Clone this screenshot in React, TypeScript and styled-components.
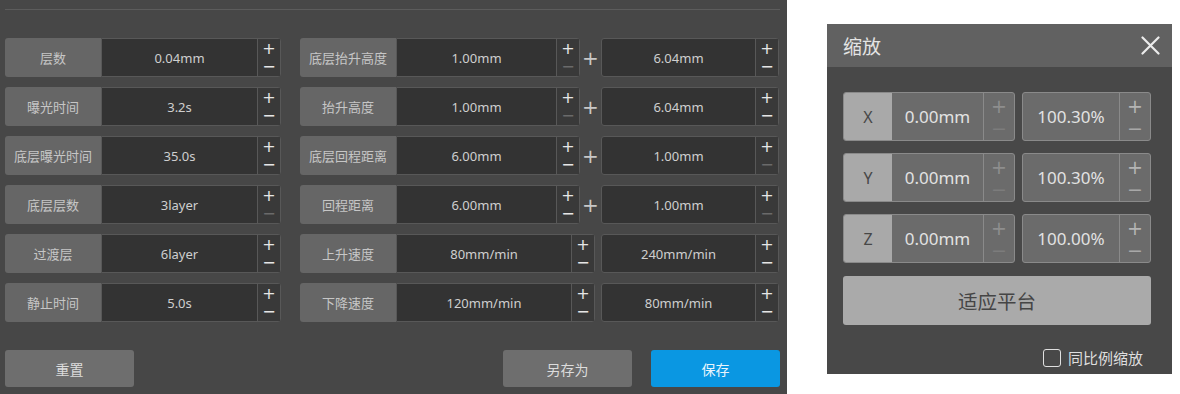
import React from "react";
import styled, { createGlobalStyle } from "styled-components";

const GlobalStyle = createGlobalStyle`
  body {
    margin: 0;
    background: #ffffff;
    font-family: "Noto Sans", "Noto Sans CJK SC", sans-serif;
  }
`;

const Page = styled.div`
  display: flex;
  align-items: flex-start;
  width: 1180px;
  height: 394px;
`;

const Panel = styled.div`
  width: 787px;
  height: 394px;
  box-sizing: border-box;
  background: #474747;
  padding: 9px 7px 0 5px;
  display: flex;
  flex-direction: column;
`;

const TopLine = styled.div`
  height: 1px;
  width: 775px;
  background: #5c5c5c;
`;

const Rows = styled.div`
  margin-top: 28px;
  display: flex;
  flex-direction: column;
  gap: 10px;
`;

const Row = styled.div`
  display: flex;
  height: 39px;
`;

const Field = styled.div<{ $w: number }>`
  display: flex;
  width: ${(p) => p.$w}px;
  height: 100%;
  flex-shrink: 0;
`;

const Label = styled.div`
  width: 96px;
  flex-shrink: 0;
  background: #666666;
  color: #c6c6c6;
  font-size: 13px;
  font-family: "Noto Sans CJK SC", sans-serif;
  border-radius: 3px 0 0 3px;
  display: flex;
  align-items: center;
  justify-content: center;
`;

const ValueBox = styled.div`
  flex: 1;
  display: flex;
  box-sizing: border-box;
  border: 1px solid #585858;
  border-radius: 0 3px 3px 0;
  background: #333333;
  &.full {
    border-radius: 3px;
  }
`;

const Value = styled.div`
  flex: 1;
  display: flex;
  align-items: center;
  justify-content: center;
  color: #cfcfcf;
  font-size: 13px;
`;

const Stepper = styled.div`
  width: 22px;
  flex-shrink: 0;
  border-left: 1px solid #585858;
  background: #393939;
  display: flex;
  flex-direction: column;
  align-items: center;
  justify-content: center;
  font-size: 16px;
  line-height: 18px;
  font-family: "DejaVu Sans", sans-serif;
`;

const Sign = styled.span<{ $dim?: boolean }>`
  color: ${(p) => (p.$dim ? "#6a6a6a" : "#e6e6e6")};
`;

const Joiner = styled.div<{ $w: number }>`
  width: ${(p) => p.$w}px;
  flex-shrink: 0;
  display: flex;
  align-items: center;
  justify-content: center;
  color: #c8c8c8;
  font-size: 20px;
  font-family: "DejaVu Sans", sans-serif;
`;

const Gap = styled.div<{ $w: number }>`
  width: ${(p) => p.$w}px;
  flex-shrink: 0;
`;

const Footer = styled.div`
  margin-top: 28px;
  display: flex;
  height: 37px;
`;

const Button = styled.button<{ $primary?: boolean }>`
  width: 129px;
  height: 37px;
  border: none;
  border-radius: 3px;
  background: ${(p) => (p.$primary ? "#0a97e2" : "#6e6e6e")};
  color: ${(p) => (p.$primary ? "#e8f4fc" : "#dcdcdc")};
  font-family: "Noto Sans CJK SC", sans-serif;
  font-size: 14px;
  padding: 0;
`;

/* right dialog */
const Dialog = styled.div`
  margin: 24px 0 0 40px;
  width: 345px;
  height: 350px;
  background: #484848;
  display: flex;
  flex-direction: column;
`;

const Header = styled.div`
  height: 43px;
  background: #616161;
  display: flex;
  align-items: center;
  justify-content: space-between;
  padding: 0 12px 0 16px;
  color: #e4e4e4;
  font-size: 19px;
  font-family: "Noto Sans CJK SC", sans-serif;
`;

const CloseIcon = styled.svg`
  width: 19px;
  height: 19px;
`;

const DialogBody = styled.div`
  padding: 25px 21px 0 16px;
  display: flex;
  flex-direction: column;
  gap: 12px;
`;

const AxisRow = styled.div`
  display: flex;
  gap: 7px;
  height: 49px;
`;

const AxisBox = styled.div<{ $w: number }>`
  width: ${(p) => p.$w}px;
  display: flex;
  box-sizing: border-box;
  border: 1px solid #8a8a8a;
  border-radius: 3px;
  background: #6b6b6b;
  overflow: hidden;
`;

const AxisLabel = styled.div`
  width: 48px;
  background: #a9a9a9;
  color: #474747;
  font-size: 16px;
  display: flex;
  align-items: center;
  justify-content: center;
`;

const AxisValue = styled.div`
  flex: 1;
  display: flex;
  align-items: center;
  justify-content: center;
  color: #e2e2e2;
  font-size: 17px;
`;

const AxisStepper = styled.div<{ $dim?: boolean }>`
  width: 30px;
  border-left: 1px solid #8a8a8a;
  display: flex;
  flex-direction: column;
  align-items: center;
  justify-content: center;
  font-family: "DejaVu Sans", sans-serif;
  font-size: 19px;
  line-height: 22px;
  color: ${(p) => (p.$dim ? "#8e8e8e" : "#b4b4b4")};
  span:last-child {
    color: ${(p) => (p.$dim ? "#7c7c7c" : "#a8a8a8")};
  }
`;

const FitButton = styled.button`
  margin-top: 1px;
  height: 49px;
  width: 308px;
  border: none;
  border-radius: 3px;
  background: #aaaaaa;
  color: #454545;
  font-family: "Noto Sans CJK SC", sans-serif;
  font-size: 19.5px;
  padding: 0;
`;

const CheckRow = styled.label`
  margin-top: 10px;
  align-self: flex-end;
  margin-right: 8px;
  display: flex;
  align-items: center;
  gap: 7px;
  color: #dedede;
  font-size: 15px;
  font-family: "Noto Sans CJK SC", sans-serif;
`;

const Box = styled.span`
  width: 18px;
  height: 18px;
  box-sizing: border-box;
  border: 1.5px solid #e0e0e0;
  border-radius: 3px;
`;

type Cell = { v: string; dim?: boolean };

const rows: {
  label: string;
  left: Cell;
  mid: string;
  midVal: Cell;
  right: Cell;
  plus: boolean;
}[] = [
  { label: "层数", left: { v: "0.04mm" }, mid: "底层抬升高度", midVal: { v: "1.00mm", dim: true }, right: { v: "6.04mm" }, plus: true },
  { label: "曝光时间", left: { v: "3.2s" }, mid: "抬升高度", midVal: { v: "1.00mm", dim: true }, right: { v: "6.04mm" }, plus: true },
  { label: "底层曝光时间", left: { v: "35.0s" }, mid: "底层回程距离", midVal: { v: "6.00mm" }, right: { v: "1.00mm", dim: true }, plus: true },
  { label: "底层层数", left: { v: "3layer", dim: true }, mid: "回程距离", midVal: { v: "6.00mm" }, right: { v: "1.00mm", dim: true }, plus: true },
  { label: "过渡层", left: { v: "6layer" }, mid: "上升速度", midVal: { v: "80mm/min" }, right: { v: "240mm/min" }, plus: false },
  { label: "静止时间", left: { v: "5.0s" }, mid: "下降速度", midVal: { v: "120mm/min" }, right: { v: "80mm/min" }, plus: false },
];

const Step = ({ dim }: { dim?: boolean }) => (
  <Stepper>
    <Sign>+</Sign>
    <Sign $dim={dim}>−</Sign>
  </Stepper>
);

const axes = [
  { a: "X", mm: "0.00mm", pct: "100.30%" },
  { a: "Y", mm: "0.00mm", pct: "100.30%" },
  { a: "Z", mm: "0.00mm", pct: "100.00%" },
];

export default function App() {
  return (
    <>
      <GlobalStyle />
      <Page>
        <Panel>
          <TopLine />
          <Rows>
            {rows.map((r) => (
              <Row key={r.label}>
                <Field $w={276}>
                  <Label>{r.label}</Label>
                  <ValueBox>
                    <Value>{r.left.v}</Value>
                    <Step dim={r.left.dim} />
                  </ValueBox>
                </Field>
                <Gap $w={19} />
                <Field $w={r.plus ? 280 : 295}>
                  <Label>{r.mid}</Label>
                  <ValueBox>
                    <Value>{r.midVal.v}</Value>
                    <Step dim={r.midVal.dim} />
                  </ValueBox>
                </Field>
                {r.plus ? <Joiner $w={21}>+</Joiner> : <Joiner $w={6} />}
                <Field $w={178}>
                  <ValueBox className="full">
                    <Value>{r.right.v}</Value>
                    <Step dim={r.right.dim} />
                  </ValueBox>
                </Field>
              </Row>
            ))}
          </Rows>
          <Footer>
            <Button>重置</Button>
            <Gap $w={369} />
            <Button>另存为</Button>
            <Gap $w={19} />
            <Button $primary>保存</Button>
          </Footer>
        </Panel>
        <Dialog>
          <Header>
            <span>缩放</span>
            <CloseIcon viewBox="0 0 19 19">
              <path d="M1.5 1.5 L17.5 17.5 M17.5 1.5 L1.5 17.5" stroke="#ececec" strokeWidth="2.2" strokeLinecap="round" />
            </CloseIcon>
          </Header>
          <DialogBody>
            {axes.map((x) => (
              <AxisRow key={x.a}>
                <AxisBox $w={172}>
                  <AxisLabel>{x.a}</AxisLabel>
                  <AxisValue>{x.mm}</AxisValue>
                  <AxisStepper $dim>
                    <span>+</span>
                    <span>−</span>
                  </AxisStepper>
                </AxisBox>
                <AxisBox $w={129}>
                  <AxisValue>{x.pct}</AxisValue>
                  <AxisStepper>
                    <span>+</span>
                    <span>−</span>
                  </AxisStepper>
                </AxisBox>
              </AxisRow>
            ))}
            <FitButton>适应平台</FitButton>
            <CheckRow>
              <Box />
              同比例缩放
            </CheckRow>
          </DialogBody>
        </Dialog>
      </Page>
    </>
  );
}
